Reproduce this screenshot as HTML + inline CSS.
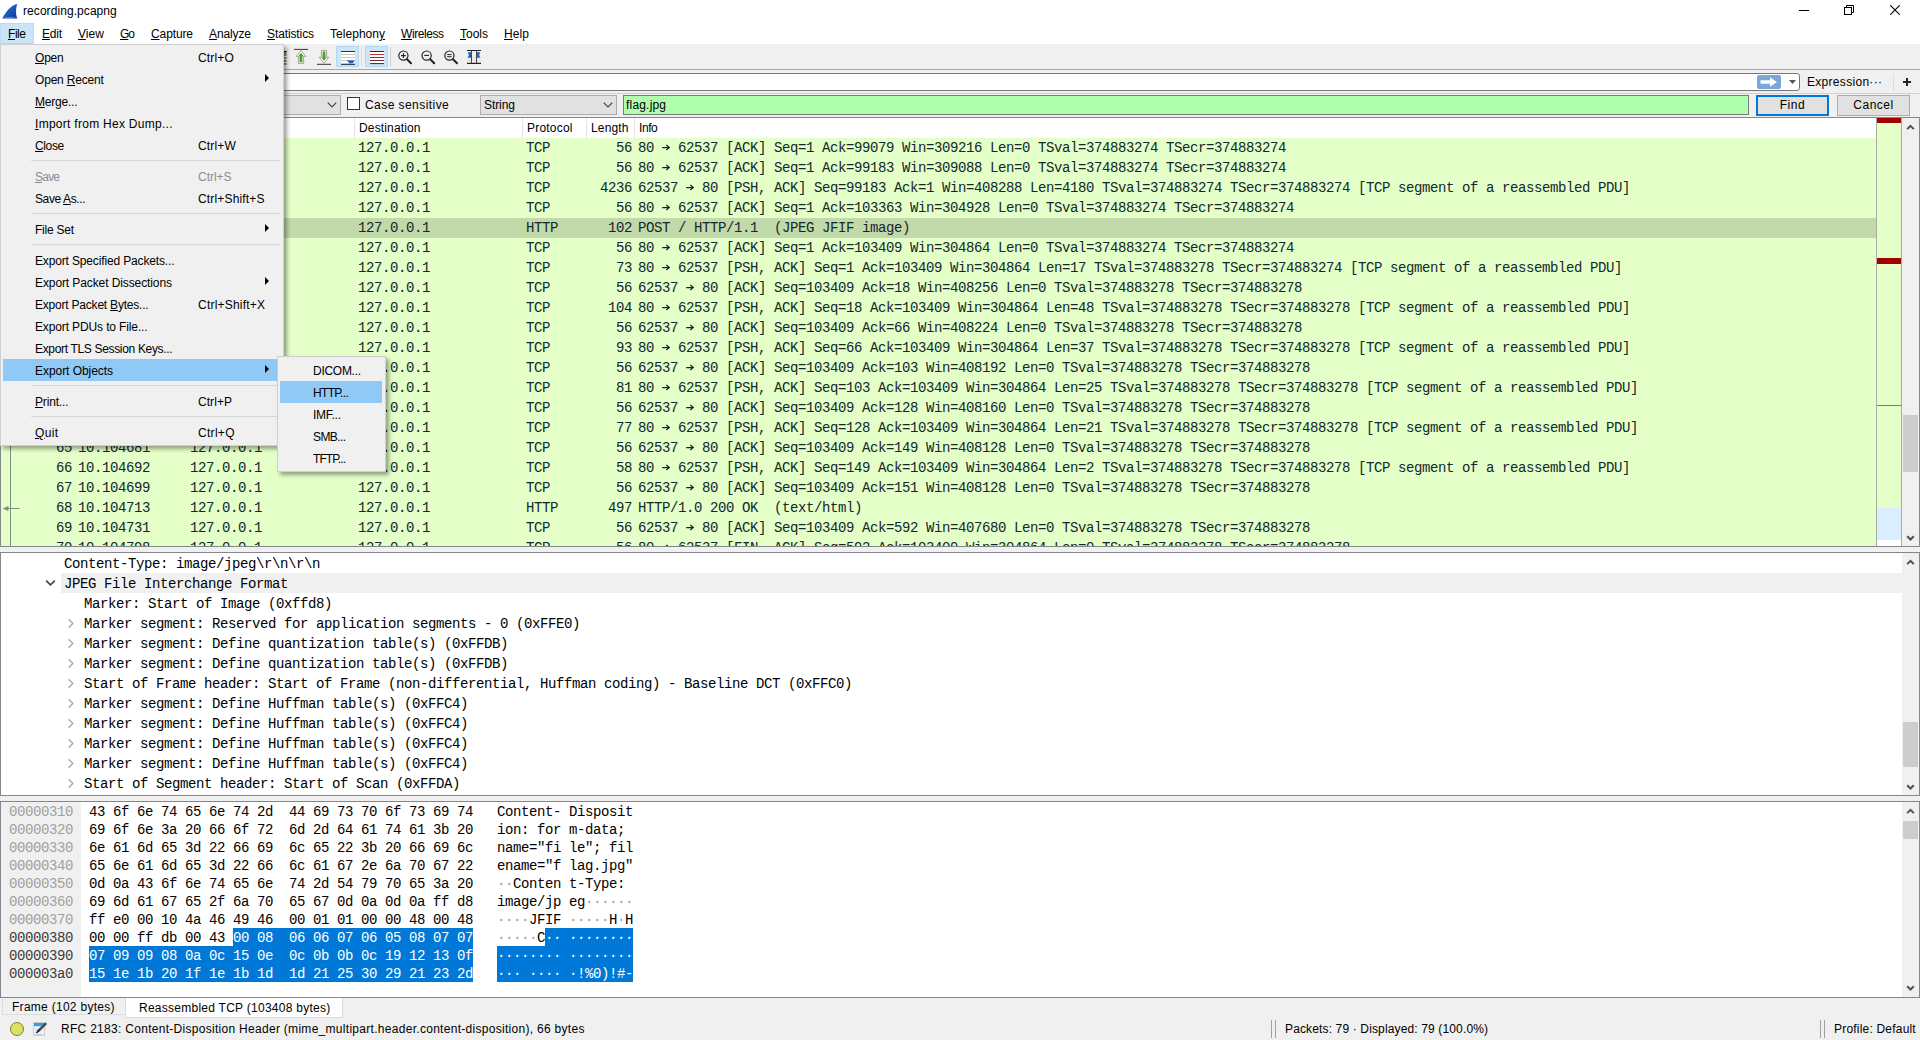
<!DOCTYPE html>
<html><head><meta charset="utf-8"><title>recording.pcapng</title>
<style>
*{box-sizing:border-box}
html,body{margin:0;padding:0}
body{width:1920px;height:1040px;overflow:hidden;background:#f0f0f0;font-family:"Liberation Sans",sans-serif;font-size:12px;color:#000;position:relative}
.abs{position:absolute}
#title{position:absolute;left:0;top:0;width:1920px;height:23px;background:#fff}
#title .t{position:absolute;left:23px;top:4px;font-size:12px;letter-spacing:0.07px;line-height:15px}
#menubar{position:absolute;left:0;top:23px;width:1920px;height:21px;background:#fff}
#menubar span{position:absolute;top:4px;line-height:14px;font-size:12px;white-space:nowrap}
#filehl{position:absolute;left:0px;top:23px;width:34px;height:21px;background:#cce4f7;border:1px solid #b9dbf4}
#toolbar{position:absolute;left:0;top:44px;width:1920px;height:26px;background:#f0f0f0}
.mono{font-family:"Liberation Mono",monospace;font-size:14px;letter-spacing:-0.401px}
/* packet list */
#plist{position:absolute;left:0;top:117px;width:1920px;height:430px;border:1px solid #848689;background:#fff;overflow:hidden}
#phead{position:absolute;left:0;top:0;width:1876px;height:20px;background:#fff}
#phead span{position:absolute;top:3px;font-size:12px;line-height:14px}
#phead i{position:absolute;top:0;width:1px;height:20px;background:#e5e5e5}
#prows{position:absolute;left:0;top:20px;width:1876px;height:410px;overflow:hidden;background:#e4ffc7}
.prow{position:absolute;left:0;width:1876px;height:20px;background:#e4ffc7;color:#12272e;font-family:"Liberation Mono",monospace;font-size:14px;letter-spacing:-0.401px;line-height:20px;white-space:pre}
.prow.sel{background:#c2d9a9}
.ar{display:inline-block;vertical-align:top}
.prow .c{position:absolute;top:0;height:20px;white-space:pre}
#mini{position:absolute;left:1875px;top:0;width:26px;height:429px;background:#e4ffc7;border-left:1px solid #a9ad9f;border-right:1px solid #a9ad9f}
.vsb{position:absolute;width:17px;background:#f0f0f0}
.vsb .th{position:absolute;left:1px;width:15px;background:#cdcdcd}
.vsb svg{position:absolute;left:4px}
/* detail */
#detail{position:absolute;left:0;top:552px;width:1920px;height:244px;border:1px solid #848689;background:#fff;overflow:hidden}
#detail .in{position:absolute;left:-1px;top:0;width:1904px;height:242px;overflow:hidden}
.dt{position:absolute;height:20px;line-height:20px;font-family:"Liberation Mono",monospace;font-size:14px;letter-spacing:-0.401px;white-space:pre;color:#000}
.dsel{position:absolute;left:61px;width:1850px;height:20px;background:#f0f0f0}
.ex{position:absolute}
/* bytes */
#bytes{position:absolute;left:0;top:801px;width:1920px;height:197px;border:1px solid #848689;background:#fff;overflow:hidden}
#bytes .in{position:absolute;left:-1px;top:0;width:1904px;height:195px;overflow:hidden}
#offbg{position:absolute;left:1px;top:0;width:80px;height:195px;background:#f0f0f0}
.off{position:absolute;left:9px;height:18px;line-height:18px;font-family:"Liberation Mono",monospace;font-size:14px;letter-spacing:-0.401px;color:#a0a0a0;white-space:pre}
.off.dk{color:#3c3c3c}
.hx{position:absolute;height:18px;line-height:18px;font-family:"Liberation Mono",monospace;font-size:14px;letter-spacing:-0.401px;color:#000;white-space:pre}
.hx.w,.hx .w{color:#fff}
.hx .g{color:#9a9a9a}
.hsel{position:absolute;height:18px;background:#0078d7}
/* tabs/status */
#tabs{position:absolute;left:0;top:998px;width:1920px;height:20px;background:#f0f0f0}
#status{position:absolute;left:0;top:1018px;width:1920px;height:22px;background:#f0f0f0}
#status span{position:absolute;top:4px;line-height:14px;white-space:nowrap}
/* menu */
#menu{position:absolute;left:0;top:44px;width:284px;height:402px;background:#f0f0f0;border:1px solid #cfcfcf;box-shadow:3px 3px 4px rgba(0,0,0,0.36)}
.mi{position:absolute;left:2px;width:275px;height:22px;line-height:22px;font-size:12px;white-space:nowrap}
.mi.hl{background:#90c8f6}
.mi.dis{color:#8d8d8d}
.mi .ml{position:absolute;left:32px;top:1px}
.mi .ms{position:absolute;left:195px;top:1px}
.mi .ma{position:absolute;left:262px;top:6px;width:0;height:0;border-left:4px solid #000;border-top:4px solid transparent;border-bottom:4px solid transparent}
.msep{position:absolute;left:30px;width:249px;height:1px;background:#d7d7d7}
#sub{position:absolute;left:277px;top:356px;width:109px;height:116px;background:#f0f0f0;border:1px solid #cfcfcf;box-shadow:3px 3px 4px rgba(0,0,0,0.36)}
#sub div{position:absolute;left:2px;width:102px;height:22px;line-height:25px;padding-left:33px;white-space:nowrap;overflow:hidden}
</style></head><body>
<div id="title">
<svg class="abs" style="left:2px;top:3px" width="16" height="16" viewBox="0 0 16 16"><defs><linearGradient id="fg" x1="0" y1="0" x2="1" y2="1"><stop offset="0" stop-color="#2a74e0"/><stop offset="1" stop-color="#0c3a9a"/></linearGradient></defs><path d="M15.2 1 C10 1.8 4.5 7.5 0.3 15.4 L15.3 15.4 C14 12.5 13.4 7 15.2 1 Z" fill="url(#fg)"/><path d="M0.3 15.4 C4 13.6 9 13.2 15.3 15.4 Z" fill="#6f95d8" opacity="0.8"/></svg>
<span class="t">recording.pcapng</span>
<svg class="abs" style="left:1799px;top:10px" width="10" height="2"><rect width="10" height="1" fill="#000"/></svg>
<svg class="abs" style="left:1844px;top:5px" width="10" height="10" viewBox="0 0 10 10"><path d="M2.5 2.5V0.5H9.5V7.5H7.5" fill="none" stroke="#000"/><rect x="0.5" y="2.5" width="7" height="7" fill="none" stroke="#000"/></svg>
<svg class="abs" style="left:1890px;top:5px" width="10" height="10" viewBox="0 0 10 10"><path d="M0.3 0.3L9.7 9.7M9.7 0.3L0.3 9.7" stroke="#000" stroke-width="1.1"/></svg>
</div>
<div id="menubar">
<span style="left:8px;letter-spacing:-0.45px"><u>F</u>ile</span><span style="left:42px;letter-spacing:-0.22px"><u>E</u>dit</span><span style="left:78px;letter-spacing:0.07px"><u>V</u>iew</span><span style="left:120px;letter-spacing:-1.00px"><u>G</u>o</span><span style="left:151px;letter-spacing:-0.11px"><u>C</u>apture</span><span style="left:209px;letter-spacing:-0.11px"><u>A</u>nalyze</span><span style="left:267px;letter-spacing:-0.11px"><u>S</u>tatistics</span><span style="left:330px;letter-spacing:0.04px">Telephon<u>y</u></span><span style="left:401px;letter-spacing:-0.43px"><u>W</u>ireless</span><span style="left:460px;letter-spacing:-0.00px"><u>T</u>ools</span><span style="left:504px;letter-spacing:0.10px"><u>H</u>elp</span>
</div>
<div id="filehl"><span style="position:absolute;left:7px;top:3px;line-height:14px;letter-spacing:-0.45px"><u>F</u>ile</span></div>
<div id="toolbar"></div>
<div class="abs" style="left:0;top:69px;width:1920px;height:1px;background:#a8a8a8"></div>
<!-- display filter -->
<div class="abs" style="left:-4px;top:73px;width:1804px;height:18px;background:#fff;border:1px solid #767676;border-radius:3px"></div>
<div class="abs" style="left:1757px;top:75px;width:24px;height:14px;background:#7aa7d8;border-radius:2px"></div>
<svg class="abs" style="left:1760px;top:77px" width="18" height="10" viewBox="0 0 18 10"><path d="M0.5 3.2H10V0.3L17 5L10 9.7V6.8H0.5Z" fill="#fff"/></svg>
<svg class="abs" style="left:1789px;top:80px" width="7" height="4"><path d="M0 0H7L3.5 4Z" fill="#555"/></svg>
<span class="abs" style="left:1807px;top:75px;line-height:14px;letter-spacing:0.30px">Expression···</span>
<div class="abs" style="left:1893px;top:74px;width:1px;height:17px;background:#dcdcdc"></div>
<svg class="abs" style="left:1903px;top:78px" width="8" height="8"><path d="M0 4H8M4 0V8" stroke="#222" stroke-width="2"/></svg>
<div class="abs" style="left:0;top:93px;width:1920px;height:1px;background:#d0d0d0"></div>
<!-- find bar -->
<div class="abs" style="left:200px;top:95px;width:141px;height:20px;background:#e1e1e1;border:1px solid #adadad"></div>
<svg class="abs" style="left:327px;top:102px" width="10" height="6"><path d="M0.7 0.7L5 5L9.3 0.7" fill="none" stroke="#444" stroke-width="1.2"/></svg>
<div class="abs" style="left:347px;top:97px;width:13px;height:13px;background:#fff;border:1px solid #333"></div>
<span class="abs" style="left:365px;top:98px;line-height:14px;letter-spacing:0.44px">Case sensitive</span>
<div class="abs" style="left:480px;top:95px;width:137px;height:20px;background:#e1e1e1;border:1px solid #adadad"></div>
<span class="abs" style="left:484px;top:98px;line-height:14px;letter-spacing:-0.07px">String</span>
<svg class="abs" style="left:603px;top:102px" width="10" height="6"><path d="M0.7 0.7L5 5L9.3 0.7" fill="none" stroke="#444" stroke-width="1.2"/></svg>
<div class="abs" style="left:623px;top:95px;width:1126px;height:20px;background:#afffaf;border:1px solid #7a7a7a"></div>
<span class="abs" style="left:626px;top:98px;line-height:14px;letter-spacing:0.19px">flag.jpg</span>
<div class="abs" style="left:1756px;top:95px;width:73px;height:21px;background:#e1e1e1;border:2px solid #0078d7"></div>
<span class="abs" style="left:1756px;top:98px;width:73px;text-align:center;line-height:14px;letter-spacing:0.6px">Find</span>
<div class="abs" style="left:1837px;top:95px;width:73px;height:21px;background:#e1e1e1;border:1px solid #adadad"></div>
<span class="abs" style="left:1837px;top:98px;width:73px;text-align:center;line-height:14px;letter-spacing:0.5px">Cancel</span>

<!-- packet list -->
<div id="plist">
 <div id="phead">
  <i style="left:353px"></i><i style="left:521px"></i><i style="left:585px"></i><i style="left:633px"></i>
  <span style="left:358px;letter-spacing:0.15px">Destination</span><span style="left:526px;letter-spacing:0.21px">Protocol</span><span style="left:590px;letter-spacing:0.16px">Length</span><span style="left:638px;letter-spacing:-0.42px">Info</span>
 </div>
 <div id="prows">
<div class="prow" style="top:0px"><span class="c" style="left:0;width:71px;text-align:right"></span><span class="c" style="left:77px"></span><span class="c" style="left:189px"></span><span class="c" style="left:357px">127.0.0.1</span><span class="c" style="left:525px">TCP</span><span class="c" style="left:585px;width:46px;text-align:right">56</span><span class="c" style="left:637px">80 <svg class="ar" width="8" height="20" viewBox="0 0 8 20"><path d="M0.2 9.5H7.2M4.3 6.9L7.4 9.5L4.3 12.1" fill="none" stroke="#12272e" stroke-width="1.25"/></svg> 62537 [ACK] Seq=1 Ack=99079 Win=309216 Len=0 TSval=374883274 TSecr=374883274</span></div>
<div class="prow" style="top:20px"><span class="c" style="left:0;width:71px;text-align:right"></span><span class="c" style="left:77px"></span><span class="c" style="left:189px"></span><span class="c" style="left:357px">127.0.0.1</span><span class="c" style="left:525px">TCP</span><span class="c" style="left:585px;width:46px;text-align:right">56</span><span class="c" style="left:637px">80 <svg class="ar" width="8" height="20" viewBox="0 0 8 20"><path d="M0.2 9.5H7.2M4.3 6.9L7.4 9.5L4.3 12.1" fill="none" stroke="#12272e" stroke-width="1.25"/></svg> 62537 [ACK] Seq=1 Ack=99183 Win=309088 Len=0 TSval=374883274 TSecr=374883274</span></div>
<div class="prow" style="top:40px"><span class="c" style="left:0;width:71px;text-align:right"></span><span class="c" style="left:77px"></span><span class="c" style="left:189px"></span><span class="c" style="left:357px">127.0.0.1</span><span class="c" style="left:525px">TCP</span><span class="c" style="left:585px;width:46px;text-align:right">4236</span><span class="c" style="left:637px">62537 <svg class="ar" width="8" height="20" viewBox="0 0 8 20"><path d="M0.2 9.5H7.2M4.3 6.9L7.4 9.5L4.3 12.1" fill="none" stroke="#12272e" stroke-width="1.25"/></svg> 80 [PSH, ACK] Seq=99183 Ack=1 Win=408288 Len=4180 TSval=374883274 TSecr=374883274 [TCP segment of a reassembled PDU]</span></div>
<div class="prow" style="top:60px"><span class="c" style="left:0;width:71px;text-align:right"></span><span class="c" style="left:77px"></span><span class="c" style="left:189px"></span><span class="c" style="left:357px">127.0.0.1</span><span class="c" style="left:525px">TCP</span><span class="c" style="left:585px;width:46px;text-align:right">56</span><span class="c" style="left:637px">80 <svg class="ar" width="8" height="20" viewBox="0 0 8 20"><path d="M0.2 9.5H7.2M4.3 6.9L7.4 9.5L4.3 12.1" fill="none" stroke="#12272e" stroke-width="1.25"/></svg> 62537 [ACK] Seq=1 Ack=103363 Win=304928 Len=0 TSval=374883274 TSecr=374883274</span></div>
<div class="prow sel" style="top:80px"><span class="c" style="left:0;width:71px;text-align:right"></span><span class="c" style="left:77px"></span><span class="c" style="left:189px"></span><span class="c" style="left:357px">127.0.0.1</span><span class="c" style="left:525px">HTTP</span><span class="c" style="left:585px;width:46px;text-align:right">102</span><span class="c" style="left:637px">POST / HTTP/1.1  (JPEG JFIF image)</span></div>
<div class="prow" style="top:100px"><span class="c" style="left:0;width:71px;text-align:right"></span><span class="c" style="left:77px"></span><span class="c" style="left:189px"></span><span class="c" style="left:357px">127.0.0.1</span><span class="c" style="left:525px">TCP</span><span class="c" style="left:585px;width:46px;text-align:right">56</span><span class="c" style="left:637px">80 <svg class="ar" width="8" height="20" viewBox="0 0 8 20"><path d="M0.2 9.5H7.2M4.3 6.9L7.4 9.5L4.3 12.1" fill="none" stroke="#12272e" stroke-width="1.25"/></svg> 62537 [ACK] Seq=1 Ack=103409 Win=304864 Len=0 TSval=374883274 TSecr=374883274</span></div>
<div class="prow" style="top:120px"><span class="c" style="left:0;width:71px;text-align:right"></span><span class="c" style="left:77px"></span><span class="c" style="left:189px"></span><span class="c" style="left:357px">127.0.0.1</span><span class="c" style="left:525px">TCP</span><span class="c" style="left:585px;width:46px;text-align:right">73</span><span class="c" style="left:637px">80 <svg class="ar" width="8" height="20" viewBox="0 0 8 20"><path d="M0.2 9.5H7.2M4.3 6.9L7.4 9.5L4.3 12.1" fill="none" stroke="#12272e" stroke-width="1.25"/></svg> 62537 [PSH, ACK] Seq=1 Ack=103409 Win=304864 Len=17 TSval=374883278 TSecr=374883274 [TCP segment of a reassembled PDU]</span></div>
<div class="prow" style="top:140px"><span class="c" style="left:0;width:71px;text-align:right"></span><span class="c" style="left:77px"></span><span class="c" style="left:189px"></span><span class="c" style="left:357px">127.0.0.1</span><span class="c" style="left:525px">TCP</span><span class="c" style="left:585px;width:46px;text-align:right">56</span><span class="c" style="left:637px">62537 <svg class="ar" width="8" height="20" viewBox="0 0 8 20"><path d="M0.2 9.5H7.2M4.3 6.9L7.4 9.5L4.3 12.1" fill="none" stroke="#12272e" stroke-width="1.25"/></svg> 80 [ACK] Seq=103409 Ack=18 Win=408256 Len=0 TSval=374883278 TSecr=374883278</span></div>
<div class="prow" style="top:160px"><span class="c" style="left:0;width:71px;text-align:right"></span><span class="c" style="left:77px"></span><span class="c" style="left:189px"></span><span class="c" style="left:357px">127.0.0.1</span><span class="c" style="left:525px">TCP</span><span class="c" style="left:585px;width:46px;text-align:right">104</span><span class="c" style="left:637px">80 <svg class="ar" width="8" height="20" viewBox="0 0 8 20"><path d="M0.2 9.5H7.2M4.3 6.9L7.4 9.5L4.3 12.1" fill="none" stroke="#12272e" stroke-width="1.25"/></svg> 62537 [PSH, ACK] Seq=18 Ack=103409 Win=304864 Len=48 TSval=374883278 TSecr=374883278 [TCP segment of a reassembled PDU]</span></div>
<div class="prow" style="top:180px"><span class="c" style="left:0;width:71px;text-align:right"></span><span class="c" style="left:77px"></span><span class="c" style="left:189px"></span><span class="c" style="left:357px">127.0.0.1</span><span class="c" style="left:525px">TCP</span><span class="c" style="left:585px;width:46px;text-align:right">56</span><span class="c" style="left:637px">62537 <svg class="ar" width="8" height="20" viewBox="0 0 8 20"><path d="M0.2 9.5H7.2M4.3 6.9L7.4 9.5L4.3 12.1" fill="none" stroke="#12272e" stroke-width="1.25"/></svg> 80 [ACK] Seq=103409 Ack=66 Win=408224 Len=0 TSval=374883278 TSecr=374883278</span></div>
<div class="prow" style="top:200px"><span class="c" style="left:0;width:71px;text-align:right"></span><span class="c" style="left:77px"></span><span class="c" style="left:189px"></span><span class="c" style="left:357px">127.0.0.1</span><span class="c" style="left:525px">TCP</span><span class="c" style="left:585px;width:46px;text-align:right">93</span><span class="c" style="left:637px">80 <svg class="ar" width="8" height="20" viewBox="0 0 8 20"><path d="M0.2 9.5H7.2M4.3 6.9L7.4 9.5L4.3 12.1" fill="none" stroke="#12272e" stroke-width="1.25"/></svg> 62537 [PSH, ACK] Seq=66 Ack=103409 Win=304864 Len=37 TSval=374883278 TSecr=374883278 [TCP segment of a reassembled PDU]</span></div>
<div class="prow" style="top:220px"><span class="c" style="left:0;width:71px;text-align:right"></span><span class="c" style="left:77px"></span><span class="c" style="left:189px"></span><span class="c" style="left:357px">127.0.0.1</span><span class="c" style="left:525px">TCP</span><span class="c" style="left:585px;width:46px;text-align:right">56</span><span class="c" style="left:637px">62537 <svg class="ar" width="8" height="20" viewBox="0 0 8 20"><path d="M0.2 9.5H7.2M4.3 6.9L7.4 9.5L4.3 12.1" fill="none" stroke="#12272e" stroke-width="1.25"/></svg> 80 [ACK] Seq=103409 Ack=103 Win=408192 Len=0 TSval=374883278 TSecr=374883278</span></div>
<div class="prow" style="top:240px"><span class="c" style="left:0;width:71px;text-align:right"></span><span class="c" style="left:77px"></span><span class="c" style="left:189px"></span><span class="c" style="left:357px">127.0.0.1</span><span class="c" style="left:525px">TCP</span><span class="c" style="left:585px;width:46px;text-align:right">81</span><span class="c" style="left:637px">80 <svg class="ar" width="8" height="20" viewBox="0 0 8 20"><path d="M0.2 9.5H7.2M4.3 6.9L7.4 9.5L4.3 12.1" fill="none" stroke="#12272e" stroke-width="1.25"/></svg> 62537 [PSH, ACK] Seq=103 Ack=103409 Win=304864 Len=25 TSval=374883278 TSecr=374883278 [TCP segment of a reassembled PDU]</span></div>
<div class="prow" style="top:260px"><span class="c" style="left:0;width:71px;text-align:right"></span><span class="c" style="left:77px"></span><span class="c" style="left:189px"></span><span class="c" style="left:357px">127.0.0.1</span><span class="c" style="left:525px">TCP</span><span class="c" style="left:585px;width:46px;text-align:right">56</span><span class="c" style="left:637px">62537 <svg class="ar" width="8" height="20" viewBox="0 0 8 20"><path d="M0.2 9.5H7.2M4.3 6.9L7.4 9.5L4.3 12.1" fill="none" stroke="#12272e" stroke-width="1.25"/></svg> 80 [ACK] Seq=103409 Ack=128 Win=408160 Len=0 TSval=374883278 TSecr=374883278</span></div>
<div class="prow" style="top:280px"><span class="c" style="left:0;width:71px;text-align:right"></span><span class="c" style="left:77px"></span><span class="c" style="left:189px"></span><span class="c" style="left:357px">127.0.0.1</span><span class="c" style="left:525px">TCP</span><span class="c" style="left:585px;width:46px;text-align:right">77</span><span class="c" style="left:637px">80 <svg class="ar" width="8" height="20" viewBox="0 0 8 20"><path d="M0.2 9.5H7.2M4.3 6.9L7.4 9.5L4.3 12.1" fill="none" stroke="#12272e" stroke-width="1.25"/></svg> 62537 [PSH, ACK] Seq=128 Ack=103409 Win=304864 Len=21 TSval=374883278 TSecr=374883278 [TCP segment of a reassembled PDU]</span></div>
<div class="prow" style="top:300px"><span class="c" style="left:0;width:71px;text-align:right">65</span><span class="c" style="left:77px">10.104681</span><span class="c" style="left:189px">127.0.0.1</span><span class="c" style="left:357px">127.0.0.1</span><span class="c" style="left:525px">TCP</span><span class="c" style="left:585px;width:46px;text-align:right">56</span><span class="c" style="left:637px">62537 <svg class="ar" width="8" height="20" viewBox="0 0 8 20"><path d="M0.2 9.5H7.2M4.3 6.9L7.4 9.5L4.3 12.1" fill="none" stroke="#12272e" stroke-width="1.25"/></svg> 80 [ACK] Seq=103409 Ack=149 Win=408128 Len=0 TSval=374883278 TSecr=374883278</span></div>
<div class="prow" style="top:320px"><span class="c" style="left:0;width:71px;text-align:right">66</span><span class="c" style="left:77px">10.104692</span><span class="c" style="left:189px">127.0.0.1</span><span class="c" style="left:357px">127.0.0.1</span><span class="c" style="left:525px">TCP</span><span class="c" style="left:585px;width:46px;text-align:right">58</span><span class="c" style="left:637px">80 <svg class="ar" width="8" height="20" viewBox="0 0 8 20"><path d="M0.2 9.5H7.2M4.3 6.9L7.4 9.5L4.3 12.1" fill="none" stroke="#12272e" stroke-width="1.25"/></svg> 62537 [PSH, ACK] Seq=149 Ack=103409 Win=304864 Len=2 TSval=374883278 TSecr=374883278 [TCP segment of a reassembled PDU]</span></div>
<div class="prow" style="top:340px"><span class="c" style="left:0;width:71px;text-align:right">67</span><span class="c" style="left:77px">10.104699</span><span class="c" style="left:189px">127.0.0.1</span><span class="c" style="left:357px">127.0.0.1</span><span class="c" style="left:525px">TCP</span><span class="c" style="left:585px;width:46px;text-align:right">56</span><span class="c" style="left:637px">62537 <svg class="ar" width="8" height="20" viewBox="0 0 8 20"><path d="M0.2 9.5H7.2M4.3 6.9L7.4 9.5L4.3 12.1" fill="none" stroke="#12272e" stroke-width="1.25"/></svg> 80 [ACK] Seq=103409 Ack=151 Win=408128 Len=0 TSval=374883278 TSecr=374883278</span></div>
<div class="prow" style="top:360px"><span class="c" style="left:0;width:71px;text-align:right">68</span><span class="c" style="left:77px">10.104713</span><span class="c" style="left:189px">127.0.0.1</span><span class="c" style="left:357px">127.0.0.1</span><span class="c" style="left:525px">HTTP</span><span class="c" style="left:585px;width:46px;text-align:right">497</span><span class="c" style="left:637px">HTTP/1.0 200 OK  (text/html)</span></div>
<div class="prow" style="top:380px"><span class="c" style="left:0;width:71px;text-align:right">69</span><span class="c" style="left:77px">10.104731</span><span class="c" style="left:189px">127.0.0.1</span><span class="c" style="left:357px">127.0.0.1</span><span class="c" style="left:525px">TCP</span><span class="c" style="left:585px;width:46px;text-align:right">56</span><span class="c" style="left:637px">62537 <svg class="ar" width="8" height="20" viewBox="0 0 8 20"><path d="M0.2 9.5H7.2M4.3 6.9L7.4 9.5L4.3 12.1" fill="none" stroke="#12272e" stroke-width="1.25"/></svg> 80 [ACK] Seq=103409 Ack=592 Win=407680 Len=0 TSval=374883278 TSecr=374883278</span></div>
<div class="prow" style="top:400px"><span class="c" style="left:0;width:71px;text-align:right">70</span><span class="c" style="left:77px">10.104798</span><span class="c" style="left:189px">127.0.0.1</span><span class="c" style="left:357px">127.0.0.1</span><span class="c" style="left:525px">TCP</span><span class="c" style="left:585px;width:46px;text-align:right">56</span><span class="c" style="left:637px">80 <svg class="ar" width="8" height="20" viewBox="0 0 8 20"><path d="M0.2 9.5H7.2M4.3 6.9L7.4 9.5L4.3 12.1" fill="none" stroke="#12272e" stroke-width="1.25"/></svg> 62537 [FIN, ACK] Seq=592 Ack=103409 Win=304864 Len=0 TSval=374883278 TSecr=374883278</span></div>
  <div class="abs" style="left:9px;top:0;width:1px;height:410px;background:#7f8e86"></div>
  <svg class="abs" style="left:1px;top:366px" width="18" height="9" viewBox="0 0 18 9"><path d="M5 4.5H17.5" stroke="#7f8e86" stroke-width="1" fill="none"/><path d="M0.6 4.5L6.4 2V7Z" fill="#7f8e86"/></svg>
 </div>
 <div id="mini">
  <div class="abs" style="left:0;top:0;width:24px;height:5px;background:#a40000"></div>
  <div class="abs" style="left:0;top:140px;width:24px;height:6px;background:#a40000"></div>
  <div class="abs" style="left:0;top:287px;width:24px;height:1px;background:#2a8fd0"></div>
  <div class="abs" style="left:0;top:390px;width:24px;height:32px;background:#daeeff"></div>
  <div class="abs" style="left:0;top:422px;width:24px;height:7px;background:#fff"></div>
 </div>
 <div class="vsb" style="left:1901px;top:0;height:429px">
  <svg style="top:6px" width="9" height="7"><path d="M1.2 5.1L4.5 1.8L7.8 5.1" fill="none" stroke="#505050" stroke-width="2"/></svg>
  <div class="th" style="top:297px;height:57px"></div>
  <svg style="top:417px" width="9" height="6"><path d="M1.2 1.2L4.5 4.5L7.8 1.2" fill="none" stroke="#505050" stroke-width="2"/></svg>
 </div>
</div>

<!-- detail -->
<div id="detail"><div class="in">
<span class="dt" style="left:64px;top:1px">Content-Type: image/jpeg\r\n\r\n</span>
<div class="dsel" style="top:20px"></div><svg class="ex" style="left:45px;top:25px" width="11" height="10" viewBox="0 0 11 10"><path d="M1.2 2.6 L5.5 6.9 L9.8 2.6" fill="none" stroke="#404040" stroke-width="1.5"/></svg><span class="dt" style="left:64px;top:21px">JPEG File Interchange Format</span>
<span class="dt" style="left:84px;top:41px">Marker: Start of Image (0xffd8)</span>
<svg class="ex" style="left:67px;top:65px" width="8" height="11" viewBox="0 0 8 11"><path d="M1.6 1.2 L5.9 5.5 L1.6 9.8" fill="none" stroke="#a6a6a6" stroke-width="1.3"/></svg><span class="dt" style="left:84px;top:61px">Marker segment: Reserved for application segments - 0 (0xFFE0)</span>
<svg class="ex" style="left:67px;top:85px" width="8" height="11" viewBox="0 0 8 11"><path d="M1.6 1.2 L5.9 5.5 L1.6 9.8" fill="none" stroke="#a6a6a6" stroke-width="1.3"/></svg><span class="dt" style="left:84px;top:81px">Marker segment: Define quantization table(s) (0xFFDB)</span>
<svg class="ex" style="left:67px;top:105px" width="8" height="11" viewBox="0 0 8 11"><path d="M1.6 1.2 L5.9 5.5 L1.6 9.8" fill="none" stroke="#a6a6a6" stroke-width="1.3"/></svg><span class="dt" style="left:84px;top:101px">Marker segment: Define quantization table(s) (0xFFDB)</span>
<svg class="ex" style="left:67px;top:125px" width="8" height="11" viewBox="0 0 8 11"><path d="M1.6 1.2 L5.9 5.5 L1.6 9.8" fill="none" stroke="#a6a6a6" stroke-width="1.3"/></svg><span class="dt" style="left:84px;top:121px">Start of Frame header: Start of Frame (non-differential, Huffman coding) - Baseline DCT (0xFFC0)</span>
<svg class="ex" style="left:67px;top:145px" width="8" height="11" viewBox="0 0 8 11"><path d="M1.6 1.2 L5.9 5.5 L1.6 9.8" fill="none" stroke="#a6a6a6" stroke-width="1.3"/></svg><span class="dt" style="left:84px;top:141px">Marker segment: Define Huffman table(s) (0xFFC4)</span>
<svg class="ex" style="left:67px;top:165px" width="8" height="11" viewBox="0 0 8 11"><path d="M1.6 1.2 L5.9 5.5 L1.6 9.8" fill="none" stroke="#a6a6a6" stroke-width="1.3"/></svg><span class="dt" style="left:84px;top:161px">Marker segment: Define Huffman table(s) (0xFFC4)</span>
<svg class="ex" style="left:67px;top:185px" width="8" height="11" viewBox="0 0 8 11"><path d="M1.6 1.2 L5.9 5.5 L1.6 9.8" fill="none" stroke="#a6a6a6" stroke-width="1.3"/></svg><span class="dt" style="left:84px;top:181px">Marker segment: Define Huffman table(s) (0xFFC4)</span>
<svg class="ex" style="left:67px;top:205px" width="8" height="11" viewBox="0 0 8 11"><path d="M1.6 1.2 L5.9 5.5 L1.6 9.8" fill="none" stroke="#a6a6a6" stroke-width="1.3"/></svg><span class="dt" style="left:84px;top:201px">Marker segment: Define Huffman table(s) (0xFFC4)</span>
<svg class="ex" style="left:67px;top:225px" width="8" height="11" viewBox="0 0 8 11"><path d="M1.6 1.2 L5.9 5.5 L1.6 9.8" fill="none" stroke="#a6a6a6" stroke-width="1.3"/></svg><span class="dt" style="left:84px;top:221px">Start of Segment header: Start of Scan (0xFFDA)</span>
 </div>
 <div class="vsb" style="left:1901px;top:0;height:242px">
  <svg style="top:6px" width="9" height="7"><path d="M1.2 5.1L4.5 1.8L7.8 5.1" fill="none" stroke="#505050" stroke-width="2"/></svg>
  <div class="th" style="top:169px;height:45px"></div>
  <svg style="top:231px" width="9" height="6"><path d="M1.2 1.2L4.5 4.5L7.8 1.2" fill="none" stroke="#505050" stroke-width="2"/></svg>
 </div>
</div>

<!-- bytes -->
<div id="bytes"><div class="in">
 <div id="offbg"></div>
<span class="off" style="top:1px">00000310</span><span class="hx" style="left:89px;top:1px">43 6f 6e 74 65 6e 74 2d  44 69 73 70 6f 73 69 74</span><span class="hx" style="left:497px;top:1px">Content- Disposit</span>
<span class="off" style="top:19px">00000320</span><span class="hx" style="left:89px;top:19px">69 6f 6e 3a 20 66 6f 72  6d 2d 64 61 74 61 3b 20</span><span class="hx" style="left:497px;top:19px">ion: for m-data; </span>
<span class="off" style="top:37px">00000330</span><span class="hx" style="left:89px;top:37px">6e 61 6d 65 3d 22 66 69  6c 65 22 3b 20 66 69 6c</span><span class="hx" style="left:497px;top:37px">name=&quot;fi le&quot;; fil</span>
<span class="off" style="top:55px">00000340</span><span class="hx" style="left:89px;top:55px">65 6e 61 6d 65 3d 22 66  6c 61 67 2e 6a 70 67 22</span><span class="hx" style="left:497px;top:55px">ename=&quot;f lag.jpg&quot;</span>
<span class="off" style="top:73px">00000350</span><span class="hx" style="left:89px;top:73px">0d 0a 43 6f 6e 74 65 6e  74 2d 54 79 70 65 3a 20</span><span class="hx" style="left:497px;top:73px"><span class="g">··</span>Conten t-Type: </span>
<span class="off" style="top:91px">00000360</span><span class="hx" style="left:89px;top:91px">69 6d 61 67 65 2f 6a 70  65 67 0d 0a 0d 0a ff d8</span><span class="hx" style="left:497px;top:91px">image/jp eg<span class="g">······</span></span>
<span class="off" style="top:109px">00000370</span><span class="hx" style="left:89px;top:109px">ff e0 00 10 4a 46 49 46  00 01 01 00 00 48 00 48</span><span class="hx" style="left:497px;top:109px"><span class="g">····</span>JFIF <span class="g">·····</span>H<span class="g">·</span>H</span>
<span class="off dk" style="top:127px">00000380</span><div class="hsel" style="left:233px;top:126px;width:240px"></div><div class="hsel" style="left:545px;top:126px;width:88px"></div><span class="hx" style="left:89px;top:127px">00 00 ff db 00 43 <span class="w">00 08  06 06 07 06 05 08 07 07</span></span><span class="hx" style="left:497px;top:127px"><span class="g">·····</span>C<span class="w">·· ········</span></span>
<span class="off dk" style="top:145px">00000390</span><div class="hsel" style="left:89px;top:144px;width:384px"></div><div class="hsel" style="left:497px;top:144px;width:136px"></div><span class="hx w" style="left:89px;top:145px">07 09 09 08 0a 0c 15 0e  0c 0b 0b 0c 19 12 13 0f</span><span class="hx w" style="left:497px;top:145px">········ ········</span>
<span class="off dk" style="top:163px">000003a0</span><div class="hsel" style="left:89px;top:162px;width:384px"></div><div class="hsel" style="left:497px;top:162px;width:136px"></div><span class="hx w" style="left:89px;top:163px">15 1e 1b 20 1f 1e 1b 1d  1d 21 25 30 29 21 23 2d</span><span class="hx w" style="left:497px;top:163px">··· ···· ·!%0)!#-</span>
 </div>
 <div class="vsb" style="left:1901px;top:0;height:195px">
  <svg style="top:6px" width="9" height="7"><path d="M1.2 5.1L4.5 1.8L7.8 5.1" fill="none" stroke="#505050" stroke-width="2"/></svg>
  <div class="th" style="top:19px;height:18px"></div>
  <svg style="top:183px" width="9" height="6"><path d="M1.2 1.2L4.5 4.5L7.8 1.2" fill="none" stroke="#505050" stroke-width="2"/></svg>
 </div>
</div>

<div id="tabs">
 <div class="abs" style="left:2px;top:1px;width:124px;height:16px;border:1px solid #dcdcdc;border-top:none"></div>
 <span class="abs" style="left:12px;top:2px;line-height:14px;letter-spacing:0.28px">Frame (102 bytes)</span>
 <div class="abs" style="left:125px;top:0;width:218px;height:20px;background:#fff;border:1px solid #dcdcdc;border-top:none"></div>
 <span class="abs" style="left:139px;top:3px;line-height:14px;letter-spacing:0.26px">Reassembled TCP (103408 bytes)</span>
</div>
<div id="status">
 <div class="abs" style="left:10px;top:4px;width:14px;height:14px;border-radius:7px;background:#dde063;border:1px solid #7f7f2a"></div>
 <svg class="abs" style="left:33px;top:4px" width="15" height="15" viewBox="0 0 15 15"><rect x="0.5" y="0.5" width="11" height="13" fill="#eef3f6" stroke="#c9d0d4"/><rect x="1" y="1" width="10" height="3.2" fill="#3f9ad6"/><path d="M2 8H6M2 10.5H5M2 12.6H9.5" stroke="#b8c2c8" stroke-width="0.8"/><path d="M13.2 1.2L5.2 9.2" stroke="#4a4a4a" stroke-width="2.6"/><path d="M5.9 8.3L4 10.4" stroke="#222" stroke-width="1.6" stroke-linecap="round"/></svg>
 <span style="left:61px;letter-spacing:0.29px">RFC 2183: Content-Disposition Header (mime_multipart.header.content-disposition), 66 bytes</span>
 <div class="abs" style="left:1271px;top:2px;width:1px;height:18px;background:#a0a0a0"></div><div class="abs" style="left:1275px;top:2px;width:1px;height:18px;background:#a0a0a0"></div>
 <span style="left:1285px;letter-spacing:0.14px">Packets: 79 · Displayed: 79 (100.0%)</span>
 <div class="abs" style="left:1820px;top:2px;width:1px;height:18px;background:#a0a0a0"></div><div class="abs" style="left:1824px;top:2px;width:1px;height:18px;background:#a0a0a0"></div>
 <span style="left:1834px;letter-spacing:0.20px">Profile: Default</span>
</div>

<!-- toolbar icons (visible part) -->
<div id="tbicons">
<svg class="abs" style="left:284px;top:50px" width="3" height="15"><rect x="0" y="1" width="2.5" height="3" fill="#8a9a2a"/><path d="M0 1.5H2.5M0 5H2.5M0 8H2.5M0 11H2.5M0 14H2.5" stroke="#111" stroke-width="1.1"/></svg>
<svg class="abs" style="left:293px;top:48px" width="16" height="17" viewBox="0 0 16 17"><path d="M1 1.4H15" stroke="#333" stroke-width="1"/><path d="M8 2.4L12.8 8.4H10.6V15.4H5.4V8.4H3.2Z" fill="#fff" stroke="#9a9a9a" stroke-width="0.9" stroke-linejoin="round"/><path d="M8 4.8L10.6 8.2H9.4V14.2H6.6V8.2H5.4Z" fill="#4f9e1c"/></svg>
<svg class="abs" style="left:316px;top:48px" width="16" height="17" viewBox="0 0 16 17"><path d="M1 16.3H15" stroke="#333" stroke-width="1"/><path d="M8 15.2L12.8 9.2H10.6V2.4H5.4V9.2H3.2Z" fill="#fff" stroke="#9a9a9a" stroke-width="0.9" stroke-linejoin="round"/><path d="M8 12.8L10.6 9.4H9.4V3.6H6.6V9.4H5.4Z" fill="#4f9e1c"/></svg>
<div class="abs" style="left:336px;top:46px;width:23px;height:21px;background:#cce4f7;border:1px solid #b5d7f2"></div>
<svg class="abs" style="left:341px;top:50px" width="14" height="16" viewBox="0 0 14 16"><rect x="0" y="2" width="14" height="12" fill="#fff"/><path d="M0 1.5H14" stroke="#22313f" stroke-width="1"/><path d="M0 4.5H14M0 7.5H14M0 10.5H8" stroke="#c9c9b8" stroke-width="1"/><path d="M6 10.2H14L11.8 13.2H8.2Z" fill="#2d62b3"/><path d="M0 14.3H14" stroke="#22313f" stroke-width="1.2"/></svg>
<div class="abs" style="left:361px;top:47px;width:1px;height:20px;background:#dedede"></div>
<div class="abs" style="left:365px;top:46px;width:23px;height:21px;background:#cce4f7;border:1px solid #b5d7f2"></div>
<svg class="abs" style="left:370px;top:50px" width="14" height="16" viewBox="0 0 14 16"><rect x="0" y="2" width="14" height="11" fill="#fff"/><path d="M0 1.5H14" stroke="#22313f" stroke-width="1"/><path d="M0 4.5H14" stroke="#d22d2d" stroke-width="1"/><path d="M0 7.5H14" stroke="#2f4f86" stroke-width="1"/><path d="M0 10.5H14" stroke="#7a2330" stroke-width="1"/><path d="M0 13.6H14" stroke="#22313f" stroke-width="1"/></svg>
<div class="abs" style="left:390px;top:47px;width:1px;height:20px;background:#d2d2d2"></div>
<svg class="abs" style="left:397px;top:49px" width="16" height="16" viewBox="0 0 16 16"><circle cx="6.4" cy="6.6" r="4.6" fill="none" stroke="#222" stroke-width="1.2"/><path d="M10 10.2L14 14.2" stroke="#222" stroke-width="2" stroke-linecap="round"/><path d="M4 6.6H8.8M6.4 4.2V9" stroke="#222" stroke-width="1.1"/></svg>
<svg class="abs" style="left:420px;top:49px" width="16" height="16" viewBox="0 0 16 16"><circle cx="6.6" cy="6.6" r="4.6" fill="none" stroke="#222" stroke-width="1.2"/><path d="M10.2 10.2L14.2 14.2" stroke="#222" stroke-width="2" stroke-linecap="round"/><path d="M4.2 6.4H9" stroke="#222" stroke-width="1.1"/></svg>
<svg class="abs" style="left:443px;top:49px" width="16" height="16" viewBox="0 0 16 16"><circle cx="6.4" cy="6.6" r="4.6" fill="none" stroke="#222" stroke-width="1.2"/><path d="M10 10.2L14 14.2" stroke="#222" stroke-width="2" stroke-linecap="round"/><path d="M4.2 5.6H8.6M4.2 7.7H8.6" stroke="#222" stroke-width="1"/></svg>
<svg class="abs" style="left:467px;top:49px" width="15" height="16" viewBox="0 0 15 16"><path d="M0 1.5H14M0 14.4H14" stroke="#222" stroke-width="1.1"/><path d="M0 8.4H14M0 11.2H14" stroke="#e2cfcf" stroke-width="0.8"/><path d="M4.5 1.5V14.4M9.5 1.5V14.4" stroke="#333" stroke-width="0.9"/><path d="M0.8 3.2H4V8.8H0.8L1.8 6Z" fill="#2d62b3"/><path d="M13.2 3.2H10V8.8H13.2L12.2 6Z" fill="#2d62b3"/></svg>
</div>

<!-- File menu -->
<div id="menu">
<div class="mi" style="top:1px"><span class="ml" style="letter-spacing:-0.20px"><u>O</u>pen</span><span class="ms" style="letter-spacing:0.15px">Ctrl+O</span></div>
<div class="mi" style="top:23px"><span class="ml" style="letter-spacing:-0.19px">Open <u>R</u>ecent</span><span class="ma"></span></div>
<div class="mi" style="top:45px"><span class="ml" style="letter-spacing:-0.21px"><u>M</u>erge...</span></div>
<div class="mi" style="top:67px"><span class="ml" style="letter-spacing:0.28px"><u>I</u>mport from Hex Dump...</span></div>
<div class="mi" style="top:89px"><span class="ml" style="letter-spacing:-0.36px"><u>C</u>lose</span><span class="ms" style="letter-spacing:0.15px">Ctrl+W</span></div>
<div class="msep" style="top:115px"></div>
<div class="mi dis" style="top:120px"><span class="ml" style="letter-spacing:-0.78px"><u>S</u>ave</span><span class="ms" style="letter-spacing:-0.04px">Ctrl+S</span></div>
<div class="mi" style="top:142px"><span class="ml" style="letter-spacing:-0.39px">Save <u>A</u>s...</span><span class="ms" style="letter-spacing:0.16px">Ctrl+Shift+S</span></div>
<div class="msep" style="top:168px"></div>
<div class="mi" style="top:173px"><span class="ml" style="letter-spacing:-0.24px">File Set</span><span class="ma"></span></div>
<div class="msep" style="top:199px"></div>
<div class="mi" style="top:204px"><span class="ml" style="letter-spacing:-0.15px">Export Specified Packets...</span></div>
<div class="mi" style="top:226px"><span class="ml" style="letter-spacing:-0.10px">Export Packet Dissections</span><span class="ma"></span></div>
<div class="mi" style="top:248px"><span class="ml" style="letter-spacing:-0.21px">Export Packet <u>B</u>ytes...</span><span class="ms" style="letter-spacing:0.21px">Ctrl+Shift+X</span></div>
<div class="mi" style="top:270px"><span class="ml" style="letter-spacing:-0.13px">Export PDUs to File...</span></div>
<div class="mi" style="top:292px"><span class="ml" style="letter-spacing:-0.33px">Export TLS Session Keys...</span></div>
<div class="mi hl" style="top:314px"><span class="ml" style="letter-spacing:-0.05px">Export Objects</span><span class="ma"></span></div>
<div class="msep" style="top:340px"></div>
<div class="mi" style="top:345px"><span class="ml" style="letter-spacing:-0.17px"><u>P</u>rint...</span><span class="ms" style="letter-spacing:0.06px">Ctrl+P</span></div>
<div class="msep" style="top:371px"></div>
<div class="mi" style="top:376px"><span class="ml" style="letter-spacing:0.33px"><u>Q</u>uit</span><span class="ms" style="letter-spacing:0.30px">Ctrl+Q</span></div>
</div>
<div id="sub">
 <div style="top:2px"><span style="letter-spacing:-0.28px">DICOM...</span></div>
 <div style="top:24px;background:#90c8f6"><span style="letter-spacing:-0.67px">HTTP...</span></div>
 <div style="top:46px"><span style="letter-spacing:-0.26px">IMF...</span></div>
 <div style="top:68px"><span style="letter-spacing:-0.60px">SMB...</span></div>
 <div style="top:90px"><span style="letter-spacing:-0.90px">TFTP...</span></div>
</div>
</body></html>
